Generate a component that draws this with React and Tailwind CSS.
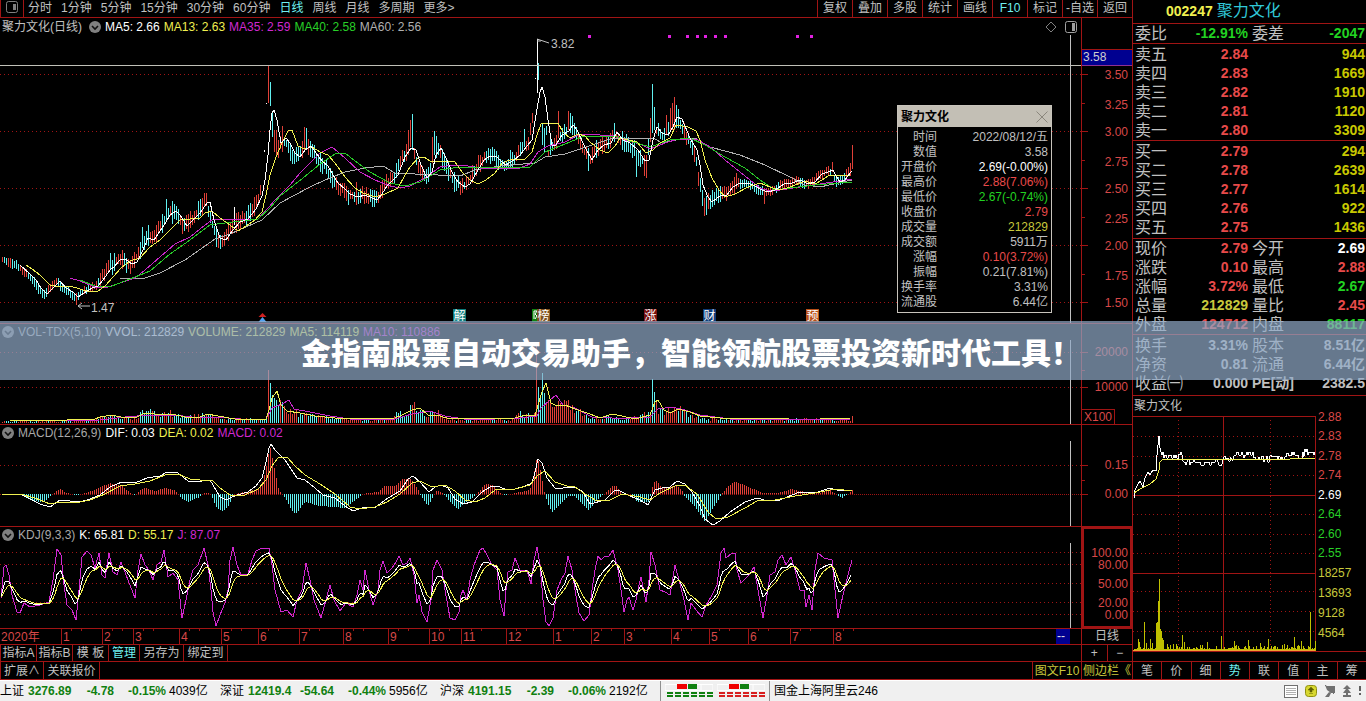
import clsx from 'clsx';

const FONT = "font-['Liberation_Sans','Noto_Sans_CJK_SC',sans-serif]";

const periods = ['分时', '1分钟', '5分钟', '15分钟', '30分钟', '60分钟', '日线', '周线', '月线', '多周期', '更多>'];
const tools = ['复权', '叠加', '多股', '统计', '画线', 'F10', '标记', '-自选', '返回'];

const asks = [['卖五', '2.84', '944'], ['卖四', '2.83', '1669'], ['卖三', '2.82', '1910'], ['卖二', '2.81', '1120'], ['卖一', '2.80', '3309']];
const bids = [['买一', '2.79', '294'], ['买二', '2.78', '2639'], ['买三', '2.77', '1614'], ['买四', '2.76', '922'], ['买五', '2.75', '1436']];

const RED = 'text-[#e84a4a]';
const GREEN = 'text-[#22d322]';
const YELLOW = 'text-[#c8c83c]';
const GRAY = 'text-[#c0c0c0]';
const WHITE = 'text-white';

const quote = [
    ['现价', '2.79', RED, '今开', '2.69', WHITE],
    ['涨跌', '0.10', RED, '最高', '2.88', RED],
    ['涨幅', '3.72%', RED, '最低', '2.67', GREEN],
    ['总量', '212829', YELLOW, '量比', '2.45', RED],
    ['外盘', '124712', RED, '内盘', '88117', GREEN],
];
const finance = [
    ['换手', '3.31%', GRAY, '股本', '8.51亿', GRAY],
    ['净资', '0.81', GRAY, '流通', '6.44亿', GRAY],
    ['收益㈠', '0.000', GRAY, 'PE[动]', '2382.5', GRAY],
];

const details = [
    ['时间', '2022/08/12/五', GRAY],
    ['数值', '3.58', GRAY],
    ['开盘价', '2.69(-0.00%)', WHITE],
    ['最高价', '2.88(7.06%)', RED],
    ['最低价', '2.67(-0.74%)', GREEN],
    ['收盘价', '2.79', RED],
    ['成交量', '212829', YELLOW],
    ['成交额', '5911万', GRAY],
    ['涨幅', '0.10(3.72%)', RED],
    ['振幅', '0.21(7.81%)', GRAY],
    ['换手率', '3.31%', GRAY],
    ['流通股', '6.44亿', GRAY],
];

const indexes = [
    ['上证', '3276.89', '-4.78', '-0.15%', '4039亿'],
    ['深证', '12419.4', '-54.64', '-0.44%', '5956亿'],
    ['沪深', '4191.15', '-2.39', '-0.06%', '2192亿'],
];

// chart series, as x y pairs
const MA5 = [1,264,6,258,10,262,20,265,30,274,36,280,41,288,47,294,53,288,60,281,66,288,73,292,78,297,84,293,92,288,98,286,103,280,110,270,114,267,120,260,125,259,132,264,137,262,142,252,148,238,154,240,160,231,166,222,170,215,176,211,180,215,187,226,193,220,200,213,207,203,210,202,214,220,220,238,226,240,232,231,240,222,248,219,256,209,262,196,265,180,268,155,270,130,272,113,274,110,277,120,281,143,286,138,290,143,295,153,300,157,305,150,311,146,316,153,322,161,328,166,333,175,338,183,345,189,350,194,358,197,365,195,372,198,377,200,382,194,387,186,392,181,398,175,405,157,411,148,416,150,421,165,427,178,432,172,436,155,441,148,446,158,452,172,458,182,465,187,470,184,478,170,484,160,490,156,496,156,502,162,506,165,514,160,520,155,527,146,532,140,536,115,540,92,542,87,545,97,548,120,552,145,556,145,562,135,569,131,573,125,577,130,584,145,592,160,598,150,604,145,611,143,617,132,623,140,630,143,638,150,645,161,649,160,653,140,657,127,662,133,668,135,673,127,677,117,682,119,690,138,697,150,700,165,703,185,708,197,712,202,720,196,727,195,733,187,740,183,748,183,755,186,762,190,768,192,775,190,784,184,792,183,800,180,808,184,815,182,822,174,828,172,833,170,836,176,840,182,845,180,850,173,852,171];
const MA13 = [26,265,32,269,40,275,50,285,60,287,70,286,80,289,90,292,98,291,105,286,113,277,121,268,130,261,140,258,150,247,160,240,170,230,180,220,190,219,200,218,205,213,212,211,220,218,230,225,238,231,246,226,255,220,262,212,266,195,270,175,276,157,282,143,288,131,292,130,298,146,304,149,312,147,320,152,328,155,335,163,345,177,355,188,363,193,375,197,385,194,398,188,405,175,410,167,418,158,424,157,430,161,445,161,455,162,462,172,470,180,478,184,486,180,495,173,502,163,510,160,525,159,532,152,537,135,541,124,558,123,563,132,570,138,578,134,585,136,590,142,600,150,608,153,615,146,620,138,628,140,637,142,646,153,653,150,660,143,670,138,676,125,688,127,696,131,700,140,705,160,712,178,719,190,725,197,735,194,748,187,760,183,770,187,780,190,790,187,805,181,815,184,822,180,828,176,850,175];
const MA35 = [70,278,80,281,95,287,108,287,120,283,135,278,145,270,160,257,175,244,190,237,200,229,212,220,258,219,268,208,275,200,290,185,300,173,320,153,332,147,345,158,360,172,375,180,390,186,400,188,410,186,425,178,440,167,455,165,468,166,480,168,500,169,520,168,530,164,538,152,548,146,565,142,580,134,600,135,615,136,625,140,640,144,650,149,665,143,678,139,698,140,712,148,725,160,740,172,750,180,760,188,770,191,780,190,800,187,820,184,852,179];
const MA40 = [80,280,95,286,112,286,130,279,150,271,170,254,190,240,210,225,225,223,258,219,270,208,280,196,303,178,320,164,335,154,345,153,355,161,370,172,390,183,405,186,420,182,440,170,460,167,530,167,545,152,570,142,582,137,615,136,630,141,650,147,670,140,690,138,705,145,725,157,745,168,760,180,775,190,790,188,815,185,852,182];
const MA60 = [120,279,145,278,160,273,185,260,215,239,230,234,262,220,280,203,310,187,325,180,345,172,365,168,383,166,395,173,415,174,460,176,475,170,500,166,535,163,545,157,565,154,580,149,610,139,630,138,655,139,662,143,680,139,695,138,710,147,740,155,765,165,790,177,805,185,820,187,852,180];
// x top bottom colour
const SPIKES = [
    [76.5,293,305,'r'], [142.5,227,248,'c'], [148.5,225,246,'c'], [110.5,253,270,'c'], [166.5,199,222,'c'], [172.5,201,224,'c'], [204.5,193,207,'r'], [206.5,193,206,'r'],
    [218.5,232,248,'r'], [222.5,235,247,'r'], [234.5,207,225,'w'], [264.5,150,152,'w'], [266.5,103,104,'w'], [268.5,66,103,'r'], [270.5,82,106,'c'], [272.5,112,137,'c'], [274.5,130,152,'r'], [276.5,130,155,'r'], [278.5,140,158,'r'],
    [282.5,126,152,'r'], [304.5,127,152,'r'], [306.5,128,150,'c'], [348.5,190,205,'c'], [356.5,182,205,'r'], [408.5,130,155,'r'], [410.5,120,147,'r'], [412.5,114,150,'c'], [432.5,137,163,'r'], [434.5,131,155,'c'], [436.5,136,158,'c'],
    [524.5,129,147,'c'], [535.5,78,79,'w'], [537.5,39,93,'w'], [538.5,63,80,'c'], [541.5,88,90,'w'], [542.5,124,145,'c'], [544.5,128,152,'c'], [548.5,150,157,'r'], [558.5,111,138,'r'], [568.5,111,130,'r'], [570.5,113,133,'c'], [572.5,116,135,'c'],
    [588.5,148,171,'c'], [614.5,123,142,'c'], [636.5,150,177,'c'], [644.5,155,176,'r'], [646.5,155,178,'r'], [650.5,118,142,'r'], [652.5,84,133,'c'], [654.5,107,130,'c'], [666.5,115,135,'r'], [670.5,108,130,'r'], [674.5,97,130,'r'], [672.5,103,130,'r'], [676.5,105,128,'c'], [678.5,109,128,'c'],
    [702.5,190,206,'c'], [704.5,198,216,'r'], [706.5,196,215,'c'], [708.5,193,209,'r'], [764.5,188,204,'r'], [832.5,162,172,'r'], [850.5,163,176,'r'], [852.5,145,169,'r'],
];
const VOL = [1,1,10,2,90,2,100,6,110,8,120,5,137,5,144,14,155,9,170,10,187,6,205,9,215,7,235,4,264,4,267,10,268,53,270,40,272,28,278,20,290,12,305,8,320,6,345,4,375,3,390,4,400,12,403,6,412,18,425,8,433,14,445,5,460,3,510,3,520,10,530,7,534,8,536,80,539,14,542,50,545,20,560,22,575,14,590,6,600,4,610,8,625,3,648,10,651,15,652,44,655,25,658,14,665,12,675,18,690,8,705,4,790,3,805,5,820,4,850,3,852,8];
const VMA5 = [10,420,40,421,95,419,100,417,112,415,125,418,137,417,145,413,165,415,172,414,185,417,200,417,207,414,218,416,235,419,266,419,269,410,272,398,277,391,281,405,287,411,300,413,315,416,345,419,395,418,402,415,412,410,420,408,428,415,436,415,447,418,470,419,515,418,525,415,535,416,538,405,542,392,546,383,551,403,557,406,565,405,575,409,590,414,600,418,612,414,622,416,635,419,650,415,655,402,658,400,664,410,670,413,678,409,690,412,700,416,730,419,790,418,820,418,850,418];
const VMA10 = [20,421,100,420,125,417,150,415,175,415,200,418,215,417,240,419,266,419,272,408,282,404,289,400,294,409,310,412,330,416,350,419,395,419,412,414,430,411,445,416,470,420,520,418,537,416,541,408,550,400,556,395,563,405,575,408,592,417,612,418,630,418,650,417,658,409,672,407,685,410,700,415,730,419,850,419];
const DIF = [2,494,20,494,30,499,40,504,50,507,60,500,70,501,80,502,90,499,100,495,110,487,122,482,135,483,147,478,160,476,167,472,178,473,188,481,195,482,210,480,213,485,220,497,226,500,232,497,237,495,248,492,256,486,262,478,266,462,269,448,271,444,275,450,285,460,297,478,305,480,315,488,323,495,335,498,345,506,353,511,362,508,376,507,385,500,400,491,408,479,413,476,420,482,429,492,435,487,441,485,448,488,455,499,463,504,472,502,482,492,490,487,497,486,505,489,515,489,525,486,532,483,535,472,538,459,542,463,547,478,555,488,563,488,575,487,583,492,590,504,605,500,615,490,620,491,630,496,640,500,648,505,655,490,662,488,670,487,677,481,685,484,692,492,700,506,705,519,713,525,720,521,730,512,745,502,757,498,768,501,780,500,792,495,800,492,815,493,830,488,840,491,852,490];
const DEA = [2,494,20,494,35,498,50,504,60,502,80,502,90,500,105,494,120,486,135,484,150,481,165,475,178,474,190,479,200,480,212,480,220,488,230,495,245,495,258,489,266,480,272,466,278,458,287,457,295,466,305,475,320,484,335,494,350,507,360,509,375,507,387,502,400,494,412,483,420,481,432,487,445,485,455,491,465,500,475,502,485,498,495,490,515,489,530,485,538,475,545,471,555,482,567,486,575,487,585,494,597,501,610,500,622,494,640,497,650,500,660,493,675,486,685,485,697,494,708,512,716,519,728,517,745,508,757,501,775,500,795,496,815,493,835,489,852,491];
const HIST = [20,0,28,-5,40,-8,45,-8,52,0,57,3,60,5,67,1,72,0,77,-1,82,0,95,4,103,8,110,11,122,8,132,0,135,-1,140,4,145,6,155,3,165,6,175,4,179,0,180,-3,188,-8,200,-3,203,1,210,1,212,-3,217,-14,223,-17,228,-13,234,0,245,2,258,5,262,10,266,25,270,49,274,28,279,4,283,0,286,-5,291,-15,296,-20,305,-8,320,-12,335,-13,345,-14,357,-5,362,0,370,1,378,2,385,8,395,8,402,15,411,15,419,3,421,-2,428,-12,433,-3,437,4,441,2,444,0,452,-10,458,-15,468,-7,477,0,485,10,493,9,502,0,505,-1,515,1,530,4,533,15,537,37,539,32,543,10,545,0,548,-10,552,-18,558,-13,568,-2,575,-2,583,-11,589,-16,597,-6,604,0,611,7,616,9,622,0,632,0,637,-8,649,-8,651,0,653,10,656,14,662,6,677,9,683,2,685,-3,693,-10,700,-20,705,-28,712,-16,722,0,728,8,735,12,745,9,762,1,778,1,792,5,805,2,820,1,830,4,836,0,842,-4,848,0,852,4];
const J = [1,598,4,567,6,565,9,575,12,595,17,612,20,613,24,603,30,607,40,605,49,602,53,580,57,549,61,555,64,585,67,605,72,610,76,620,79,590,82,557,87,551,91,555,95,568,99,553,102,575,105,578,109,553,113,572,117,575,121,562,128,580,135,598,138,570,141,554,145,565,149,570,153,580,157,565,161,562,164,550,168,577,173,573,178,580,182,618,186,600,190,580,193,570,198,565,204,548,208,565,211,590,213,612,216,626,220,615,225,603,228,590,230,560,233,547,237,565,241,575,248,574,252,560,256,551,262,548,269,548,272,565,275,590,281,612,287,610,293,617,297,600,302,590,306,563,310,580,314,600,321,618,326,600,330,585,334,600,340,611,346,603,353,607,357,595,360,580,363,590,365,570,369,590,373,605,378,590,380,570,383,561,387,573,392,568,396,562,399,556,403,565,407,563,410,558,414,575,417,603,419,595,422,612,427,622,431,600,433,570,437,560,442,570,445,590,450,618,455,620,459,612,461,595,463,590,467,600,470,580,474,565,480,550,483,548,487,555,492,565,497,570,500,600,504,616,506,590,508,572,512,570,515,558,520,570,527,570,531,584,534,560,537,547,540,565,543,600,546,622,549,626,553,618,557,590,561,580,565,573,568,556,572,570,575,590,579,613,584,621,589,615,592,590,595,570,598,556,601,560,604,557,609,556,613,550,618,570,621,590,624,612,627,600,629,597,633,610,636,600,639,585,641,577,646,602,649,580,651,552,655,565,660,590,665,592,670,595,675,565,679,580,684,600,688,620,691,603,696,610,702,617,706,605,711,597,717,585,721,553,724,548,726,558,732,553,735,553,737,570,741,583,749,575,754,567,758,590,763,618,767,595,770,575,775,572,778,560,782,555,786,565,791,557,795,570,800,590,804,590,806,607,809,595,812,610,815,570,818,553,824,558,832,560,834,580,838,618,843,595,848,575,852,560];
const MONTHS = [[61,'1'],[102,'2'],[133,'3'],[179,'4'],[221,'5'],[258,'6'],[299,'7'],[343,'8'],[388,'9'],[429,'10'],[461,'11'],[506,'12'],[553,'1'],[591,'2'],[624,'3'],[671,'4'],[709,'5'],[748,'6'],[790,'7'],[833,'8']];

function at(series, x) {
    if (x <= series[0]) return series[1];
    for (let i = 2; i < series.length; i += 2) {
        if (x <= series[i]) {
            const t = (x - series[i - 2]) / (series[i] - series[i - 2]);
            return series[i - 1] + t * (series[i + 1] - series[i - 1]);
        }
    }
    return series[series.length - 1];
}

function makeRandom(seed) {
    let s = seed;
    return () => {
        s = (s * 16807) % 2147483647;
        return s / 2147483647;
    };
}

const vbar = (x, y1, y2) => `M${x} ${Math.round(y1)}V${Math.round(y2)}`;

function buildCandles() {
    const rnd = makeRandom(77);
    const out = { r: '', c: '', w: '' };
    const taken = new Set(SPIKES.map((s) => Math.floor(s[0])));
    let key = 'r';
    for (let x = 2.5; x < 853; x += 2) {
        const a = rnd();
        const b = rnd();
        const c = rnd();
        if (taken.has(Math.floor(x)) || (x > 262 && x < 280) || (x > 534 && x < 546)) continue;
        const calm = x < 100 || x > 740;
        const size = calm ? 3 : 8;
        const mid = at(MA5, x + 3);
        const rising = at(MA5, x + 4) < at(MA5, x);
        // runs of a few days keep their colour
        if (c > 0.45) key = (c < 0.88) === rising ? 'r' : 'c';
        out[key] += vbar(x, mid - 2 - a * size, mid + 3 + b * size);
    }
    SPIKES.forEach(([x, y1, y2, k]) => {
        out[k] += vbar(x, y1, y2);
    });
    return out;
}

function buildVolume() {
    const rnd = makeRandom(991);
    const out = { r: '', c: '' };
    let key = 'r';
    for (let x = 2.5; x < 853; x += 2) {
        const h = at(VOL, x - 0.5);
        const k = h > 24 ? 1 : 0.6 + rnd() * 0.7;
        const c = rnd();
        if (h > 50) key = 'r';
        else if (h > 30) key = 'c';
        else if (c > 0.4) key = c < 0.72 ? 'r' : 'c';
        out[key] += vbar(x, 423 - Math.max(1, h * k), 423);
    }
    return out;
}

function buildHist() {
    const out = { r: '', c: '' };
    for (let x = 2.5; x < 853; x += 2) {
        const h = at(HIST, x);
        if (Math.abs(h) < 0.5) continue;
        out[h > 0 ? 'r' : 'c'] += vbar(x, 494, 494 - h);
    }
    return out;
}

// D is smoothed out of J, then K = (J + 2D) / 3
function buildKdj() {
    const k = [];
    const d = [];
    let prev = 597;
    for (let x = 1; x <= 852; x += 2) {
        const j = at(J, x);
        prev = (6 * prev + j) / 7;
        d.push(x, prev);
        k.push(x, (j + 2 * prev) / 3);
    }
    return { k, d };
}

function buildIntraday() {
    const rnd = makeRandom(4242);
    const base = [46,457,48,452,50,458,88,463,90,460,100,457,102,455,120,455,122,460,137,459,140,456,152,457,160,455,170,455,172,452,182,452];
    const price = [1,498,2,490,5,484,7,481,10,487,12,478,15,472,17,475,20,470,23,471,24,455,26,436,27,448,29,455];
    for (let x = 30; x < 183; x += 1) {
        const mid = x < 45 ? 455 : x > 50 && x < 88 ? 462 : at(base, x);
        price.push(x, mid + Math.round((rnd() - 0.5) * 2) * 3);
    }
    let vol = '';
    const peaks = { 5: 12, 11: 29, 17: 12, 23: 28, 24: 29, 25: 50, 26: 72, 27: 22, 28: 20, 29: 13, 30: 11, 49: 16, 51: 9, 74: 9, 88: 15, 101: 10, 115: 11, 127: 8, 135: 12, 151: 7, 161: 14, 168: 10, 177: 39, 182: 10 };
    for (let x = 1; x < 183; x += 1) {
        const r = rnd();
        const h = peaks[x] || 2 + r * r * r * (x < 50 ? 8 : x > 160 ? 6 : 4);
        vol += vbar(x + 0.5, 651 - h, 651);
    }
    return { price, vol };
}

const candles = buildCandles();
const volume = buildVolume();
const hist = buildHist();
const kdj = buildKdj();
const intraday = buildIntraday();

function Line({ data, color }) {
    return <polyline points={data.join(' ')} fill="none" stroke={color} strokeWidth="1" shapeRendering="crispEdges" />;
}

function Bars({ d, color }) {
    return <path d={d} stroke={color} strokeWidth="1" fill="none" shapeRendering="crispEdges" />;
}

function Dotted({ ys }) {
    return ys.map((y) => (
        <line key={y} x1="0" x2="100%" y1={y + 0.5} y2={y + 0.5} stroke="#a01414" strokeDasharray="1 3" shapeRendering="crispEdges" />
    ));
}

function Plot({ top, className, cross, children }) {
    return (
        <svg className={clsx('block w-full', className)}>
            <g transform={`translate(0 ${-top})`}>
                {children}
                <line x1="1070.5" x2="1070.5" y1={cross[0]} y2={cross[1]} stroke="#c0c0c0" shapeRendering="crispEdges" />
            </g>
        </svg>
    );
}

function Axis({ top, className, labels, ticks, children }) {
    return (
        <svg className={clsx('block w-[51px] shrink-0 border-l border-[#a01414] text-xs', className)}>
            <g transform={`translate(0 ${-top})`}>
                {ticks.map(([y, w]) => (
                    <line key={y} x1="0" x2={w} y1={y + 0.5} y2={y + 0.5} stroke="#a01414" shapeRendering="crispEdges" />
                ))}
                {labels.map(([y, t]) => (
                    <text key={t} x="46" y={y + 4} textAnchor="end" fill="#d84848">{t}</text>
                ))}
                {children}
            </g>
        </svg>
    );
}

function Toggle() {
    return (
        <button aria-label="指标菜单" className="size-3">
            <svg viewBox="0 0 12 12" className="size-3">
                <circle cx="6" cy="6" r="6" fill="#808080" />
                <path d="M3 5l3 3 3-3" fill="none" stroke="#101010" strokeWidth="1.6" />
            </svg>
        </button>
    );
}

function Legend({ name, values }) {
    return (
        <div className="flex h-4 items-center gap-1 pl-[2px] leading-3 whitespace-nowrap">
            <Toggle />
            <span className="text-[#a8a8a8]">{name}</span>
            {values.map(([text, color]) => (
                <span key={text} className={color}>{text}</span>
            ))}
        </div>
    );
}

function Badge({ x, w, fill, text }) {
    return (
        <g>
            <rect x={x} y="309" width={w} height="13" fill={fill} />
            <text x={x + w / 2} y="320" fontSize="12" textAnchor="middle" fill="#fff">{text}</text>
        </g>
    );
}

function DetailBox() {
    return (
        <div className="absolute top-[87px] right-[29px] w-[155px] border border-[#c8c4bc] bg-black">
            <div className="flex h-[21px] items-center justify-between bg-[#c3bfb5] px-[3px] font-bold text-black">
                聚力文化
                <button aria-label="关闭">
                    <svg viewBox="0 0 12 12" className="size-3">
                        <path d="M0.5 0.5l11 11M11.5 0.5l-11 11" stroke="#8a867c" />
                    </svg>
                </button>
            </div>
            <dl className="px-[3px] pt-[3px] pb-[2px]">
                {details.map(([label, value, color]) => (
                    <div key={label} className="flex justify-between leading-[15px]">
                        <dt className="w-9 text-right text-[#c0c0c0]">{label}</dt>
                        <dd className={color}>{value}</dd>
                    </div>
                ))}
            </dl>
        </div>
    );
}

function Toolbar() {
    return (
        <nav className="flex h-[18px] items-start justify-between border-b border-[#a01414] leading-[15px] whitespace-nowrap text-[#c0c0c0]">
            <div className="flex gap-1">
                <button aria-label="左侧栏" className="flex h-[17px] w-6 items-center justify-center border-x border-[#a01414] pb-1">
                    <svg viewBox="0 0 12 12" className="size-3">
                        <rect x="0.5" y="0.5" width="11" height="11" rx="2" fill="none" stroke="#808080" />
                        <rect x="7" y="3" width="3" height="6" fill="#808080" />
                    </svg>
                </button>
                <div className="flex gap-[9px]">
                    {periods.map((p) => (
                        <button key={p} className={p === '日线' ? 'text-[#6ff0f0]' : ''}>{p}</button>
                    ))}
                </div>
            </div>
            <div className="flex">
                {tools.map((t) => (
                    <button key={t} className={clsx('h-[17px] w-[35px] border-l border-[#a01414] leading-[15px]', t === 'F10' && 'text-[#6ff0f0]')}>{t}</button>
                ))}
            </div>
        </nav>
    );
}

function PricePanel() {
    return (
        <section className="flex border-b border-[#a01414]">
            <div className="relative min-w-0 flex-1">
                <div className="flex h-[17px] items-center justify-between pr-1 pl-[2px] whitespace-nowrap">
                    <div className="flex items-center gap-1">
                        <span className="mr-[3px] text-[#c0c0c0]">聚力文化(日线)</span>
                        <Toggle />
                        <span className="text-white">MA5: 2.66</span>
                        <span className="text-[#f0f050]">MA13: 2.63</span>
                        <span className="text-[#d028d0]">MA35: 2.59</span>
                        <span className="text-[#28d028]">MA40: 2.58</span>
                        <span className="text-[#b0b0b0]">MA60: 2.56</span>
                    </div>
                    <div className="flex items-center gap-2">
                        <svg viewBox="0 0 12 12" className="size-3">
                            <path d="M6 1l5 5-5 5-5-5z" fill="none" stroke="#808080" />
                        </svg>
                        <svg viewBox="0 0 12 12" className="size-3">
                            <rect x="0.5" y="0.5" width="11" height="11" rx="2" fill="none" stroke="#a0a0a0" />
                            <rect x="7" y="2" width="3" height="8" fill="#a0a0a0" />
                        </svg>
                    </div>
                </div>
                <Plot top={35} className="h-[288px] text-xs" cross={[35, 323]}>
                    <Dotted ys={[74, 131, 188, 245, 302]} />
                    {[588, 668, 686, 696, 704, 714, 724, 796, 810].map((x) => (
                        <rect key={x} x={x} y="35" width="3" height="3" fill="#e020e0" />
                    ))}
                    <Bars d={candles.r} color="#e04038" />
                    <Bars d={candles.c} color="#60f0f0" />
                    <Bars d={candles.w} color="#ffffff" />
                    <Line data={MA60} color="#b0b0b0" />
                    <Line data={MA35} color="#c828c8" />
                    <Line data={MA40} color="#28c828" />
                    <Line data={MA13} color="#f0f050" />
                    <Line data={MA5.slice(6)} color="#ffffff" />
                    <path d="M537 41h4M537 39l12 4M78 306h12M78 306l4-3M78 306l4 3" stroke="#c0c0c0" fill="none" />
                    <text x="551" y="48" fill="#c0c0c0">3.82</text>
                    <text x="91" y="312" fill="#c0c0c0">1.47</text>
                    <line x1="0" x2="100%" y1="65.5" y2="65.5" stroke="#c0c0b8" shapeRendering="crispEdges" />
                    <path d="M262.5 313l4 4h-8z" fill="#d02020" />
                    <path d="M262.5 317l4 5h-8z" fill="#50a0f0" />
                    <Badge x={453} w={13} fill="#0f7c7c" text="解" />
                    <rect x="532" y="309" width="6" height="13" fill="#108010" />
                    <path d="M534 311v8M534 311h3l-2 3 2 2-2 3" stroke="#fff" fill="none" />
                    <Badge x={537} w={13} fill="#80501c" text="榜" />
                    <Badge x={644} w={13} fill="#781010" text="涨" />
                    <Badge x={703} w={13} fill="#103c78" text="财" />
                    <Badge x={806} w={13} fill="#b85018" text="预" />
                </Plot>
                <DetailBox />
            </div>
            <Axis
                top={18}
                className="h-[305px]"
                labels={[[75, '3.50'], [105, '3.25'], [132, '3.00'], [162, '2.75'], [189, '2.50'], [219, '2.25'], [246, '2.00'], [276, '1.75'], [303, '1.50']]}
                ticks={[[74, 6], [103, 3], [131, 6], [160, 3], [188, 6], [217, 3], [245, 6], [274, 3], [302, 6]]}
            >
                <rect x="0" y="49" width="50" height="17" fill="#000090" />
                <path d="M0 49.5h50" stroke="#a01414" />
                <path d="M0 65.5h50" stroke="#903090" />
                <text x="1" y="61" fill="#d0d0d0">3.58</text>
            </Axis>
        </section>
    );
}

function VolumePanel() {
    return (
        <section className="flex border-b border-[#a01414]">
            <div className="min-w-0 flex-1">
                <Legend
                    name="VOL-TDX(5,10)"
                    values={[['VVOL: 212829', 'text-[#e0e0e0]'], ['VOLUME: 212829', 'text-[#e8e860]'], ['MA5: 114119', 'text-[#f0f050]'], ['MA10: 110886', 'text-[#d028d0]']]}
                />
                <Plot top={340} className="h-[84px]" cross={[340, 424]}>
                    <Dotted ys={[352, 387]} />
                    <Bars d={volume.r} color="#e04038" />
                    <Bars d={volume.c} color="#60f0f0" />
                    <Line data={VMA10} color="#c828c8" />
                    <Line data={VMA5} color="#f0f050" />
                </Plot>
            </div>
            <Axis top={324} className="h-[100px]" labels={[[352, '20000'], [387, '10000']]} ticks={[[352, 6], [370, 3], [387, 6]]}>
                <rect x="-0.5" y="409.5" width="33" height="15" fill="none" stroke="#a01414" />
                <text x="2" y="421" fill="#d84848">X100</text>
            </Axis>
        </section>
    );
}

function MacdPanel() {
    return (
        <section className="flex border-b border-[#a01414]">
            <div className="min-w-0 flex-1">
                <Legend name="MACD(12,26,9)" values={[['DIF: 0.03', 'text-white'], ['DEA: 0.02', 'text-[#f0f050]'], ['MACD: 0.02', 'text-[#d028d0]']]} />
                <Plot top={441} className="h-[85px]" cross={[441, 526]}>
                    <Dotted ys={[465]} />
                    <line x1="0" x2="100%" y1="494.5" y2="494.5" stroke="#a01414" strokeDasharray="1 1" shapeRendering="crispEdges" />
                    <Bars d={hist.r} color="#e04038" />
                    <Bars d={hist.c} color="#60f0f0" />
                    <Line data={DIF} color="#ffffff" />
                    <Line data={DEA} color="#f0f050" />
                </Plot>
            </div>
            <Axis top={425} className="h-[101px]" labels={[[465, '0.15'], [494, '0.00']]} ticks={[[465, 6], [480, 3], [494, 6]]} />
        </section>
    );
}

function KdjPanel() {
    return (
        <section className="flex border-b border-[#a01414]">
            <div className="min-w-0 flex-1">
                <Legend name="KDJ(9,3,3)" values={[['K: 65.81', 'text-white'], ['D: 55.17', 'text-[#f0f050]'], ['J: 87.07', 'text-[#d028d0]']]} />
                <Plot top={543} className="h-[85px]" cross={[543, 628]}>
                    <Dotted ys={[552, 564, 583, 602, 614]} />
                    <Line data={J} color="#d028d0" />
                    <Line data={kdj.k} color="#ffffff" />
                    <Line data={kdj.d} color="#f0f050" />
                </Plot>
            </div>
            <Axis top={527} className="h-[101px]" labels={[[553, '100.00'], [565, '80.00'], [584, '50.00'], [603, '20.00'], [615, '0.00']]} ticks={[]}>
                <rect x="1" y="528" width="48" height="99" fill="none" stroke="#a01414" strokeWidth="2" />
            </Axis>
        </section>
    );
}

function DateRow() {
    return (
        <div className="flex h-4 border-b border-[#a01414]">
            <svg className="block h-[15px] min-w-0 flex-1">
                <text x="1" y="12" fill="#d84848">2020年</text>
                {MONTHS.map(([x, m]) => (
                    <g key={x}>
                        <path d={`M${x + 0.5} 0v15M${x + 10.5} 0v2M${x + 20.5} 0v2`} stroke="#a01414" shapeRendering="crispEdges" />
                        <text x={x + 2} y="12" fill="#d84848">{m}</text>
                    </g>
                ))}
                <rect x="1056" y="0" width="14" height="15" fill="#000090" />
                <text x="1057" y="11" fill="#e0e0e0">--</text>
            </svg>
            <div className="w-[51px] border-l border-[#a01414] text-center leading-[15px] text-[#c0c0c0]">日线</div>
        </div>
    );
}

function BottomRows() {
    const btn = 'border-r border-[#a01414] text-center';
    return (
        <div className="leading-4 whitespace-nowrap text-[#c0c0c0]">
            <div className="flex h-[17px] justify-between border-b border-[#a01414]">
                <div className="flex border-l border-[#a01414]">
                    <button className={clsx(btn, 'w-9')}>指标A</button>
                    <button className={clsx(btn, 'w-9')}>指标B</button>
                    <button className={clsx(btn, 'w-9')}>模 板</button>
                    <button className={clsx(btn, 'w-[31px] text-[#6ff0f0]')}>管理</button>
                    <button className={clsx(btn, 'w-11')}>另存为</button>
                    <button className={clsx(btn, 'w-11')}>绑定到</button>
                </div>
                <div className="flex w-[51px] border-l border-[#a01414]">
                    <button className={clsx(btn, 'flex-1')}>+</button>
                    <button className="flex-1 text-center">−</button>
                </div>
            </div>
            <div className="flex h-[18px] justify-between border-b border-[#a01414]">
                <div className="flex border-l border-[#a01414]">
                    <button className={clsx(btn, 'w-[43px]')}>扩展∧</button>
                    <button className={clsx(btn, 'w-14')}>关联报价</button>
                </div>
                <div className="flex text-[#c8c83c]">
                    <button className="w-[49px] border-l border-[#a01414]">图文F10</button>
                    <button className="w-[51px] border-l border-[#a01414]">侧边栏《</button>
                </div>
            </div>
        </div>
    );
}

function OrderTable({ rows, className }) {
    return (
        <div className={clsx('border-b border-[#a01414] pt-px', className)}>
            <table className="w-full border-collapse leading-[19px]">
                <tbody>
                    {rows.map(([label, price, amount]) => (
                        <tr key={label} className="h-[19px]">
                            <th className="p-0 pl-[2px] text-left font-normal">{label}</th>
                            <td className="w-[70px] p-0 text-right text-sm leading-[19px] font-bold text-[#e84a4a]">{price}</td>
                            <td className="w-[118px] p-0 pr-px text-right text-sm leading-[19px] font-bold text-[#c8c800]">{amount}</td>
                        </tr>
                    ))}
                </tbody>
            </table>
        </div>
    );
}

function PairRow({ row }) {
    const [l1, v1, c1, l2, v2, c2] = row;
    return (
        <dl className="grid grid-cols-2 gap-1 pr-px pl-[2px] leading-[19px] whitespace-nowrap">
            <div className="flex justify-between">
                <dt>{l1}</dt>
                <dd className={clsx('text-sm leading-[19px] font-bold', c1)}>{v1}</dd>
            </div>
            <div className="flex justify-between">
                <dt className={clsx(l2 === 'PE[动]' && 'text-sm leading-[19px] font-bold')}>{l2}</dt>
                <dd className={clsx('text-sm leading-[19px] font-bold', c2)}>{v2}</dd>
            </div>
        </dl>
    );
}

function IntradayChart() {
    const labels = [
        [417, '2.88', '#d84848'], [436, '2.83', '#d84848'], [456, '2.78', '#d84848'], [475, '2.74', '#d84848'], [495, '2.69', '#ffffff'],
        [514, '2.64', '#28d028'], [534, '2.60', '#28d028'], [553, '2.55', '#28d028'],
        [573, '18257', '#c8c83c'], [593, '13693', '#c8c83c'], [613, '9128', '#c8c83c'], [633, '4564', '#c8c83c'],
    ];
    return (
        <svg className="-mt-2 block h-[253px] w-full text-xs">
            <g transform="translate(0 -408)">
                <g stroke="#a01414" shapeRendering="crispEdges" fill="none">
                    <path d="M0 416.5H182.5V651M0 495.5H182M0 573.5H182M90.5 416V651" />
                    <line x1="0" x2="100%" y1="651.5" y2="651.5" />
                    <path d="M0 436.5H182M0 456.5H182M0 475.5H182M0 514.5H182M0 534.5H182M0 553.5H182M0 591.5H182M0 611.5H182M0 631.5H182M45.5 416V651M137.5 416V651" strokeDasharray="1 3" />
                </g>
                <Bars d={intraday.vol} color="#c0c000" />
                <path d="M0 650.5h182" stroke="#f0a030" />
                <Line data={intraday.price} color="#ffffff" />
                <Line data={[1, 493, 7, 489, 17, 484, 23, 479, 26, 470, 27, 462, 30, 459, 157, 459, 182, 458]} color="#f0f050" />
                {labels.map(([y, t, c]) => (
                    <text key={t} x="185" y={y + 4} fill={c}>{t}</text>
                ))}
            </g>
        </svg>
    );
}

function Sidebar() {
    return (
        <aside className="flex w-[234px] shrink-0 flex-col border-l border-[#a01414] text-base text-[#c0c0c0]">
            <h1 className="flex h-6 items-center gap-1 border-b border-[#a01414] pb-[2px] pl-[33px] leading-[19px]">
                <span className="text-sm font-bold text-[#f0f050]">002247</span>
                <span className="text-[#30c8d8]">聚力文化</span>
            </h1>
            <div className="border-b border-[#a01414]">
                <PairRow row={['委比', '-12.91%', GREEN, '委差', '-2047', GREEN]} />
            </div>
            <OrderTable rows={asks} />
            <OrderTable rows={bids} className="pb-px" />
            <div className="border-b border-[#a01414]">
                {quote.map((row) => <PairRow key={row[0]} row={row} />)}
            </div>
            <div className="border-b border-[#a01414] pt-px pb-[2px]">
                {finance.map((row) => <PairRow key={row[0]} row={row} />)}
            </div>
            <h2 className="h-5 pl-px text-xs leading-5">聚力文化</h2>
            <IntradayChart />
            <div className="mt-auto flex h-[19px] border-y border-[#a01414] text-xs">
                {['笔', '价', '细', '势', '联', '值', '主', '筹'].map((t, i) => (
                    <button key={t} className={clsx('flex-1', i > 0 && 'border-l border-[#a01414]', t === '势' && 'text-[#6ff0f0]')}>{t}</button>
                ))}
            </div>
        </aside>
    );
}

function Meter({ dash }) {
    return (
        <svg viewBox="0 0 48 14" className="h-[14px] w-12">
            <path d="M0 0.5h48v6H0zM13 0v6M24 0v6M36 0v6" fill="none" stroke="#ffffff" />
            <rect x="12" y="0" width="10" height="5" fill="#f00000" />
            <rect x="23" y="0" width="9" height="5" fill="#108010" />
            <path d="M2 9h46M2 12h46" stroke={dash} strokeWidth="2" strokeDasharray="6 2" />
        </svg>
    );
}

function StatusBar() {
    return (
        <footer className="flex h-[21px] items-center justify-between border-t border-white bg-[#f0f0f0] whitespace-nowrap text-black">
            <div className="flex items-center">
                {indexes.map(([name, value, change, pct, amount]) => (
                    <div key={name} className="flex w-[220px]">
                        <span className="w-7">{name}</span>
                        <span className="w-[46px] font-bold text-[#108010]">{value}</span>
                        <span className="w-10 text-right font-bold text-[#108010]">{change}</span>
                        <span className="w-[52px] text-right font-bold text-[#108010]">{pct}</span>
                        <span className="pl-[3px]">{amount}</span>
                    </div>
                ))}
                <div className="flex h-5 items-center gap-1 border-x border-[#909090] px-1">
                    <Meter dash="#108010" />
                    <Meter dash="#d82020" />
                </div>
                <span className="pl-1">国金上海阿里云246</span>
            </div>
            <div className="flex items-center gap-[7px] pr-1">
                <svg viewBox="0 0 14 13" className="h-[13px] w-[14px]">
                    <rect x="0.5" y="0.5" width="13" height="12" fill="#fff" stroke="#707070" />
                    <path d="M2 3.5h10M2 5.5h10M2 7.5h10M2 9.5h10" stroke="#b0b0b0" />
                </svg>
                <svg viewBox="0 0 12 12" className="size-3">
                    <rect x="0.5" y="0.5" width="11" height="11" rx="3" fill="#d8d830" stroke="#909010" />
                    <path d="M6 2l3 3H7v2H5V5H3zM4 8.5h4" fill="#606000" stroke="#606000" strokeWidth="0.5" />
                </svg>
                <svg viewBox="0 0 12 13" className="h-[13px] w-3">
                    <path d="M1 0l2 1h8v7H7L3 5zM5 7l-4 5h4l2-4z" fill="#707070" />
                    <path d="M1 0l9 9" stroke="#707070" />
                </svg>
                <svg viewBox="0 0 8 12" className="h-3 w-2">
                    <path d="M4 0l4 4H5l3 4H5v2h3v2H0v-2h3V8H0l3-4H0z" fill="#707070" />
                </svg>
                <svg viewBox="0 0 4 12" className="h-3 w-1">
                    <path d="M2 1v5M2 8v2" stroke="#606060" strokeWidth="2" />
                </svg>
            </div>
        </footer>
    );
}

function App() {
    return (
        <div className={clsx('relative flex min-h-screen flex-col overflow-hidden bg-black text-xs', FONT)}>
            <main className="flex">
                <div className="min-w-0 flex-1">
                    <Toolbar />
                    <PricePanel />
                    <VolumePanel />
                    <MacdPanel />
                    <KdjPanel />
                    <DateRow />
                    <BottomRows />
                </div>
                <Sidebar />
            </main>
            <StatusBar />
            <div className="absolute inset-x-0 top-[321px] flex h-[59px] items-center justify-center bg-[#92abc9]/70">
                <p className="pl-4 font-['Noto_Sans_CJK_SC',sans-serif] text-3xl leading-none font-black whitespace-nowrap text-white">金指南股票自动交易助手，智能领航股票投资新时代工具！</p>
            </div>
        </div>
    );
}

export default App;
